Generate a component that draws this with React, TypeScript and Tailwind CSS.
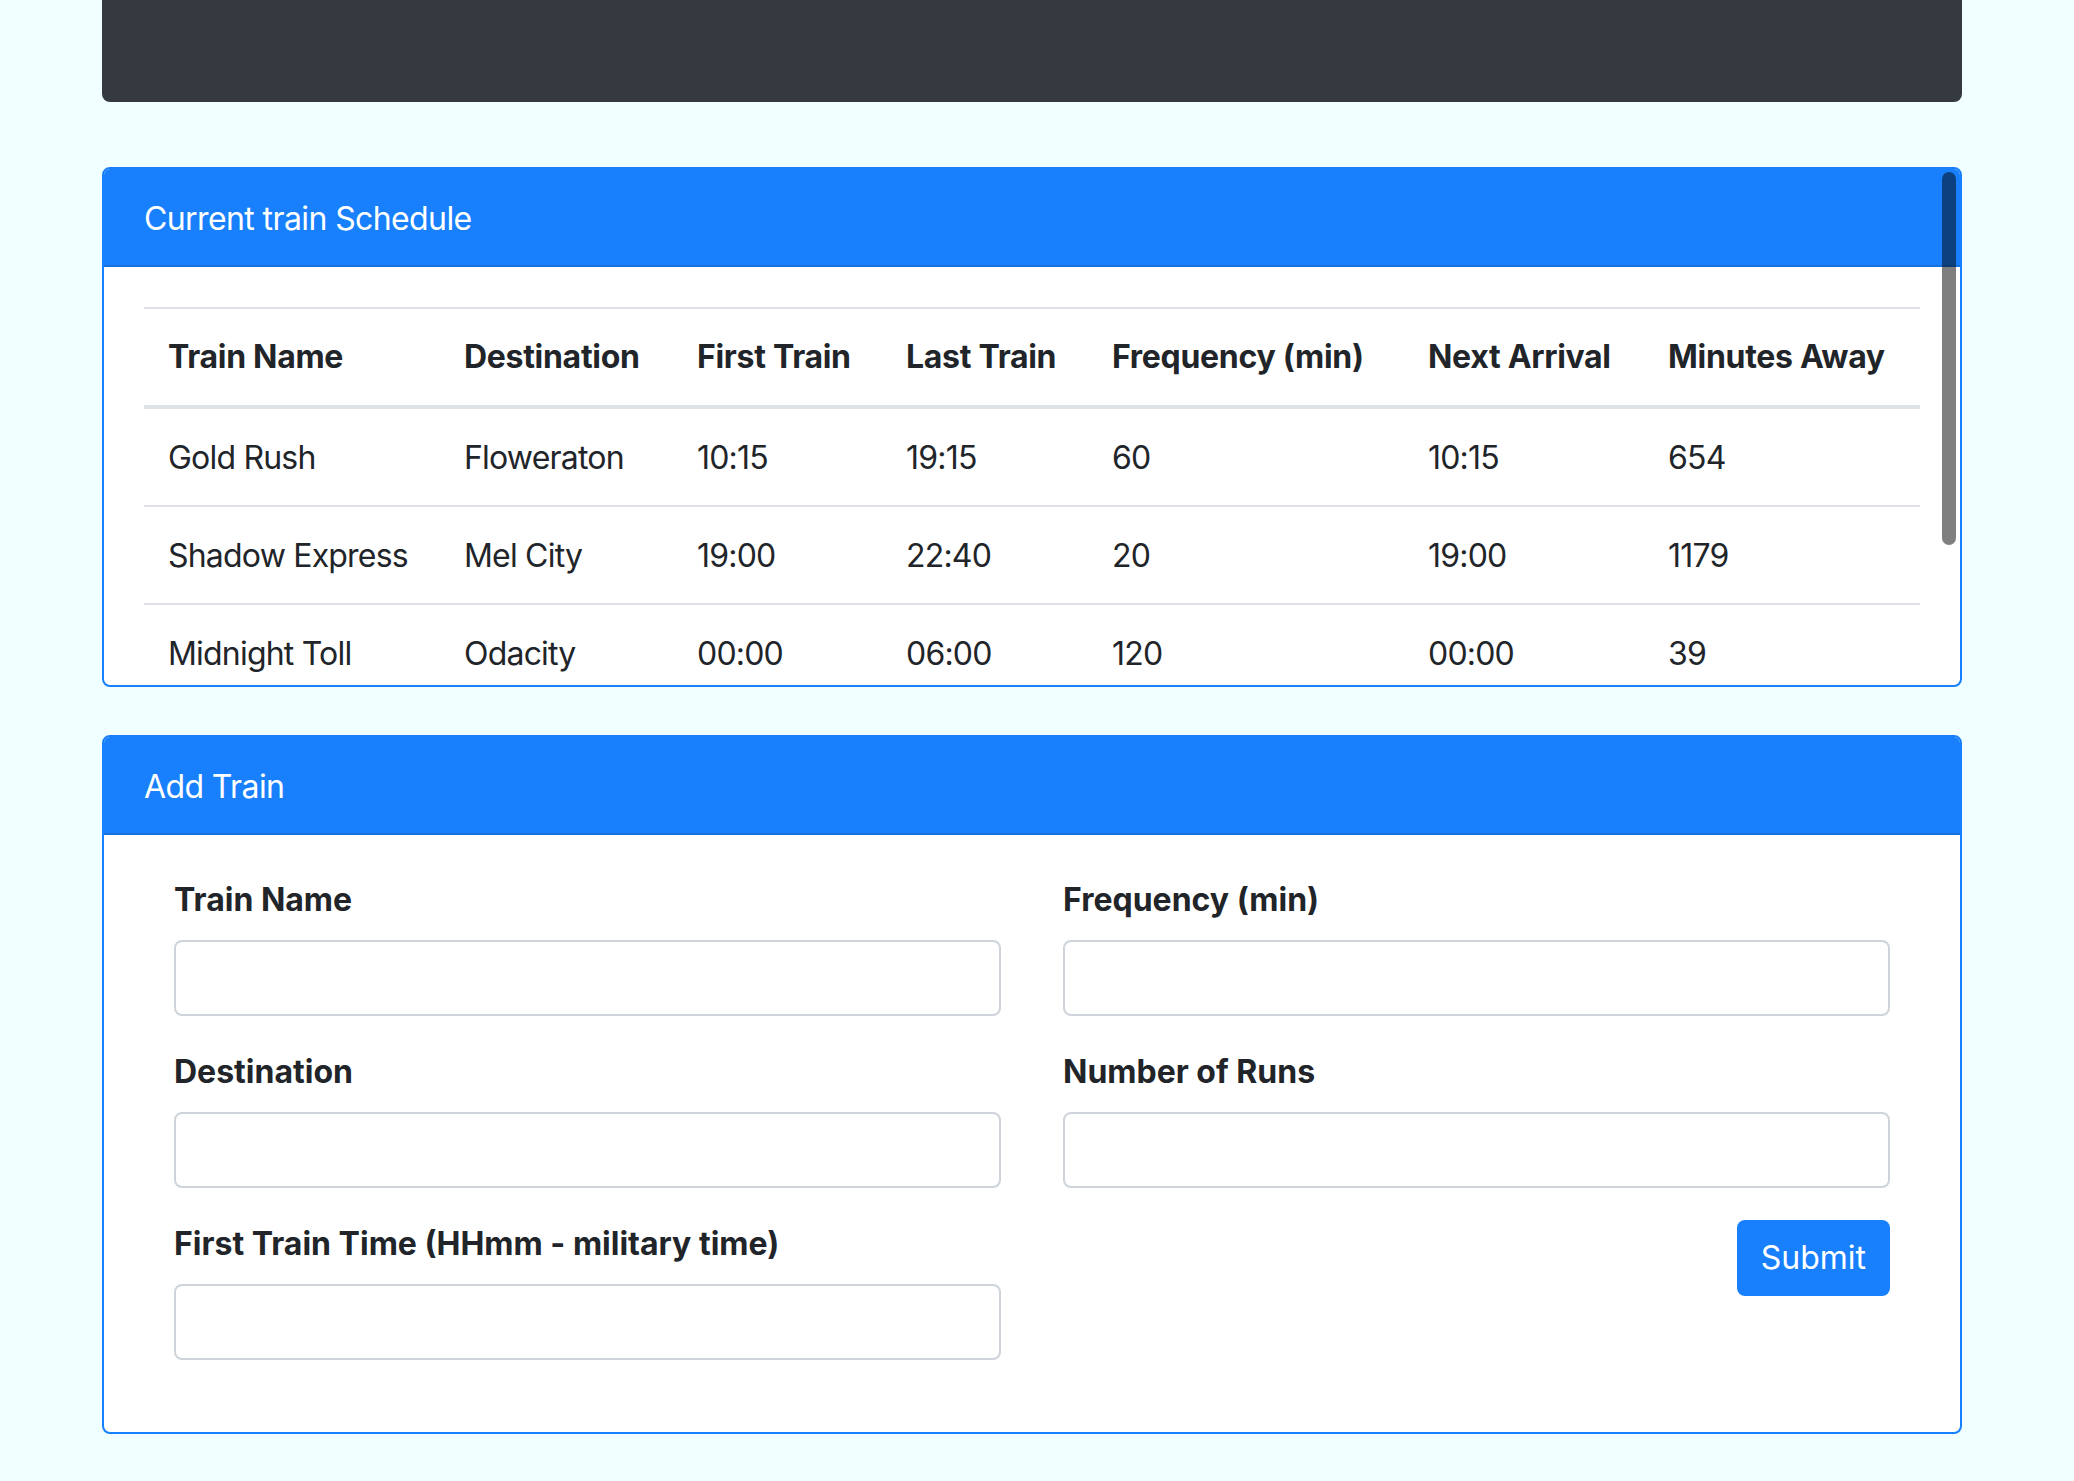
const columns = [
  { label: 'Train Name', width: 'w-[296px]' },
  { label: 'Destination', width: 'w-[233px]' },
  { label: 'First Train', width: 'w-[209px]' },
  { label: 'Last Train', width: 'w-[206px]' },
  { label: 'Frequency (min)', width: 'w-[316px]' },
  { label: 'Next Arrival', width: 'w-[240px]' },
  { label: 'Minutes Away', width: 'w-[276px]' },
]

const trains = [
  ['Gold Rush', 'Floweraton', '10:15', '19:15', '60', '10:15', '654'],
  ['Shadow Express', 'Mel City', '19:00', '22:40', '20', '19:00', '1179'],
  ['Midnight Toll', 'Odacity', '00:00', '06:00', '120', '00:00', '39'],
]

function Field({ label }: { label: string }) {
  return (
    <div className="mb-[32px]">
      <label className="block mb-[16px] font-bold leading-[48px]">{label}</label>
      <input
        type="text"
        className="block w-full h-[76px] bg-white border-2 border-[#ced4da] rounded-[8px] px-[24px] outline-none"
      />
    </div>
  )
}

export default function App() {
  return (
    <div className="min-h-[1481px] bg-[#f0ffff] text-[#212529] text-[32px] leading-[48px] font-[Inter,sans-serif]">
      {/* Top bar */}
      <div className="ml-[102px] w-[1860px] h-[102px] bg-[#343a40] rounded-b-[8px]" />

      {/* Schedule card */}
      <div className="relative ml-[102px] w-[1860px] mt-[65px] h-[520px] border-2 border-[#1880fc] rounded-[8px] bg-white overflow-hidden">
        <div className="bg-[#1880fc] text-white h-[98px] px-[40px] pt-[4px] flex items-center border-b-2 border-[#1672e0] tracking-[-0.6px]">
          Current train Schedule
        </div>
        <div className="pt-[40px] pl-[40px] pr-[40px]">
          <table className="w-[1776px] table-fixed border-collapse text-left">
            <thead>
              <tr>
                {columns.map((c) => (
                  <th
                    key={c.label}
                    className={`${c.width} px-[24px] py-[24px] font-bold border-t-2 border-b-4 border-[#dee2e6] whitespace-nowrap tracking-[-0.3px]`}
                  >
                    {c.label}
                  </th>
                ))}
              </tr>
            </thead>
            <tbody>
              {trains.map((row) => (
                <tr key={row[0]}>
                  {row.map((cell, i) => (
                    <td key={i} className="px-[24px] pt-[25px] pb-[23px] border-t-2 border-[#dee2e6] whitespace-nowrap tracking-[-0.8px]">
                      {cell}
                    </td>
                  ))}
                </tr>
              ))}
            </tbody>
          </table>
        </div>
        {/* overlay scrollbar thumb */}
        <div className="absolute top-[3px] right-[4px] w-[14px] h-[373px] rounded-full bg-black/50" />
      </div>

      {/* Add train card */}
      <div className="ml-[102px] w-[1860px] mt-[48px] border-2 border-[#1880fc] rounded-[8px] bg-white overflow-hidden">
        <div className="bg-[#1880fc] text-white h-[98px] px-[40px] pt-[4px] flex items-center border-b-2 border-[#1672e0] tracking-[-0.6px]">
          Add Train
        </div>
        <form className="pt-[41px] pb-[40px] px-[70px] grid grid-cols-2 gap-x-[62px]">
          <div>
            <Field label="Train Name" />
            <Field label="Destination" />
            <Field label="First Train Time (HHmm - military time)" />
          </div>
          <div>
            <Field label="Frequency (min)" />
            <Field label="Number of Runs" />
            <div className="flex justify-end">
              <button
                type="button"
                className="h-[76px] px-[24px] bg-[#1880fc] text-white rounded-[8px] leading-[48px]"
              >
                Submit
              </button>
            </div>
          </div>
        </form>
      </div>
    </div>
  )
}
